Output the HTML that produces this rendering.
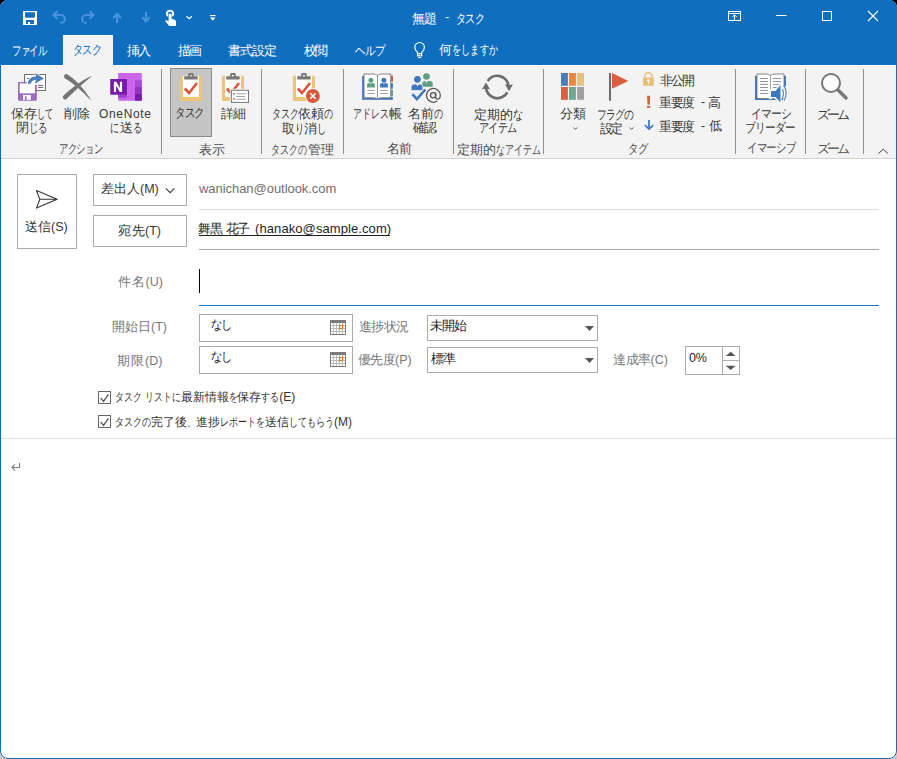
<!DOCTYPE html>
<html><head><meta charset="utf-8">
<style>
*{box-sizing:border-box;margin:0;padding:0}
html,body{width:897px;height:759px;overflow:hidden}
body{font-family:"Liberation Sans",sans-serif;position:relative;background:linear-gradient(#000 0 50%,#c8c8c8 50% 100%)}
#win{position:absolute;left:0;top:0;width:897px;height:759px;background:#fff;border-radius:8px;overflow:hidden}
#frame{position:absolute;left:0;top:0;width:897px;height:759px;border-radius:8px;border:1px solid #106ebe;pointer-events:none}
.p{position:absolute}
#title{left:0;top:0;width:897px;height:65px;background:#106ebe}
#ribbon{left:0;top:65px;width:897px;height:93px;background:#f3f3f3;border-bottom:1px solid #d2d2d2}
.t{position:absolute;white-space:nowrap;line-height:14px}
.tab{top:43px;font-size:12.5px;color:#fff}
.rl{font-size:12px;color:#262626}
.gl{top:142px;font-size:12px;color:#444}
.sep{position:absolute;top:69px;width:1px;height:84px;background:#c6c6c6}
.lbl{font-size:12.5px;color:#707070}
.box{position:absolute;border:1px solid #ababab;background:#fff}
svg{position:absolute;overflow:visible}
</style></head><body>
<div id="win">
<svg width="897" height="759" viewBox="0 0 897 759" style="left:0;top:0;position:absolute">
<!-- backgrounds -->
<rect x="0" y="0" width="897" height="65" fill="#106ebe"/>
<rect x="0" y="65" width="897" height="93" fill="#f3f3f3"/>
<rect x="0" y="65" width="897" height="1" fill="#fbfbfb"/>
<rect x="0" y="158" width="897" height="1" fill="#d2d2d2"/>
<rect x="63" y="35" width="50" height="31" fill="#f3f3f3"/><rect x="63" y="35" width="50" height="1" fill="#fafafa"/><rect x="63" y="35" width="1" height="30" fill="#fafafa"/>

<!-- QAT -->
<rect x="23" y="11" width="14" height="14" fill="#fff"/>
<path d="M25 12.3h10v4.4l-1 1H26l-1-1z" fill="#106ebe"/>
<rect x="26" y="20" width="8" height="4" fill="#106ebe"/>
<rect x="28" y="22" width="2" height="2" fill="#fff"/>
<g fill="none" stroke="#4593da" stroke-width="2.1">
<path d="M53 15H61A3.9 3.9 0 0 1 61 22.8H60.2M57.4 11.2L53.5 15 57.4 18.8"/>
<path d="M94 15H86A3.9 3.9 0 0 0 86 22.8H86.8M89.6 11.2L93.5 15 89.6 18.8"/>
<path d="M117.1 23V13.8M113.3 17.9L117.1 13.8 120.9 17.9" stroke-width="2.2"/>
<path d="M146 12V21.4M142.2 17.3L146 21.4 149.8 17.3" stroke-width="2.2"/>
</g>
<path d="M167.82 16.03A3.15 3.15 0 1 1 172.28 16.03" fill="none" stroke="#f4f4f4" stroke-width="2"/>
<path d="M168.6 14.5q0-1.1 1.5-1.1t1.5 1.1V18.8l3.2 1q1.2.4 1.2 1.7V26h-6.7l-4.3-5.2q.8-1 2-.3l1.6 1.1z" fill="#fff"/>
<path d="M186.5 16.3l2.7 2.4 2.7-2.4" fill="none" stroke="#fff" stroke-width="1.2"/>
<rect x="210" y="15" width="5.5" height="1.1" fill="#fff"/>
<path d="M210 17.4h5.5l-2.75 3.3z" fill="#fff"/>

<!-- window controls -->
<g fill="none" stroke="#fff" stroke-width="1">
<rect x="728.5" y="11.5" width="12" height="9"/>
<path d="M728.5 13.5h12M734.5 20.5V15M732.3 17l2.2-2.2 2.2 2.2"/>
<path d="M776 15.5h10.5"/>
<rect x="822.5" y="11.5" width="9" height="9"/>
<path d="M868 11l10 10M878 11l-10 10" stroke-width="1.1"/>
<path d="M417.7 53.5L417.2 52Q414.8 50 414.8 47.3A4.8 4.8 0 0 1 424.4 47.3Q424.4 50 422 52L421.5 53.5" stroke-width="1.2"/>
<rect x="417.6" y="53.6" width="4" height="2.2" stroke-width="1.2"/>
</g>
<rect x="418" y="57" width="3.2" height="1.1" fill="#fff"/>

<!-- ribbon separators -->
<g fill="#8f8f8f"><rect x="161" y="69" width="1" height="85"/><rect x="261" y="69" width="1" height="85"/><rect x="343" y="69" width="1" height="85"/><rect x="453" y="69" width="1" height="85"/><rect x="543" y="69" width="1" height="85"/><rect x="735" y="69" width="1" height="85"/><rect x="805" y="69" width="1" height="85"/><rect x="863" y="69" width="1" height="85"/></g>
<path d="M878.5 153.5l4.7-4.3 4.7 4.3" fill="none" stroke="#444" stroke-width="1"/>

<!-- selected button -->
<rect x="170.5" y="68.5" width="41" height="68" fill="#c5c5c5" stroke="#8a8a8a"/>

<!-- Save & close icon -->
<g transform="translate(14,68)">
<rect x="10.5" y="6.5" width="21" height="16" fill="#fff" stroke="#6d6d6d"/>
<path d="M13 10.5h2M24 17.5h5M24 19.5h5" stroke="#6d6d6d"/>
<path d="M4 15q0-1 1-1h7.8v1.6H5.8v9.6H21V16.8h1.8v14.9q0 1-1 1H5q-1 0-1-1z" fill="#9b6bbe"/>
<rect x="5.8" y="15.6" width="15.2" height="9.6" fill="#fff"/>
<rect x="9" y="27" width="7.8" height="4.9" fill="#fff"/>
<rect x="10.9" y="28.3" width="1.7" height="3.6" fill="#9b6bbe"/>
<path d="M13.8 15.7C14.5 11 17.5 8.5 22 8.5L21.2 5 30 10.4 20.8 15.7 22 11.8C19.5 11.8 17.5 13 16.8 15.7Z" fill="#4a7fbf" stroke="#fff" stroke-width="1.6" paint-order="stroke"/>
</g>
<!-- Delete -->
<g transform="translate(58,68)" fill="#747474">
<path d="M7.18 10.51Q17.02 15.96 32.33 31.82L32.87 31.38Q19.98 12.44 9.42 6.49A2.30 2.30 0 0 0 7.18 10.51Z"/>
<path d="M8.71 30.85Q21.08 18.42 33.39 8.60L33.01 8.00Q18.52 15.18 5.49 27.55A2.30 2.30 0 0 0 8.71 30.85Z"/>
</g>
<!-- OneNote -->
<g transform="translate(106,68)">
<rect x="12.1" y="5" width="23.7" height="27.7" rx=".6" fill="#ca64ea"/>
<rect x="29" y="12.1" width="6.8" height="6.9" fill="#ae4bd5"/>
<rect x="29" y="19" width="6.8" height="6.9" fill="#9332bf"/>
<rect x="29" y="25.9" width="6.8" height="6.8" fill="#7719aa"/>
<rect x="12.1" y="26.8" width="8.6" height="3" fill="#9e40c8"/>
<rect x="4.2" y="11.1" width="16.7" height="15.7" rx=".7" fill="#7719aa"/>
<path d="M7.9 24V13.8h2.4l3.6 6.3v-6.3h2.2V24h-2.3l-3.7-6.4V24z" fill="#fff"/>
</g>
<!-- Task (clipboard) -->
<g id="clip1" transform="translate(174,68)">
<rect x="5.9" y="7.8" width="22.1" height="25.2" rx="1" fill="#ebc57a"/>
<rect x="9" y="7.8" width="15.9" height="21.1" fill="#fff"/>
<rect x="10.2" y="8.3" width="13.5" height="3.3" rx=".5" fill="#777"/>
<rect x="14.2" y="5" width="5.5" height="4" rx="1" fill="#777"/>
<rect x="16.1" y="6.9" width="1.7" height="1.6" fill="#ddd"/>
<path d="M10.8 20.5l4.2 4.5 8-10" fill="none" stroke="#d9583b" stroke-width="2.6"/>
</g>
<!-- Details -->
<g transform="translate(216,68)">
<rect x="5.9" y="7.8" width="22.1" height="25.2" rx="1" fill="#ebc57a"/>
<rect x="9" y="7.8" width="15.9" height="21.1" fill="#fff"/>
<rect x="10.2" y="8.3" width="13.5" height="3.3" rx=".5" fill="#777"/>
<rect x="14.2" y="5" width="5.5" height="4" rx="1" fill="#777"/>
<rect x="16.1" y="6.9" width="1.7" height="1.6" fill="#fff"/>
<path d="M10.8 20.5l4.2 4.5 8-10" fill="none" stroke="#d9583b" stroke-width="2.6"/>
<rect x="13.9" y="20.8" width="20.1" height="15.1" fill="#f3f3f3"/>
<rect x="15.4" y="22.3" width="17.1" height="12.1" fill="#fff" stroke="#777"/>
<rect x="17.1" y="25" width="1.7" height="1.7" fill="#888"/>
<rect x="17.1" y="30" width="1.7" height="1.7" fill="#888"/>
<path d="M20.2 25.8h9.8M20.2 28.5h8.8M20.2 31.2h9.8" stroke="#999" stroke-width=".9"/>
</g>
<!-- Cancel assignment -->
<g transform="translate(287,68)">
<rect x="5.9" y="7.8" width="22.1" height="25.2" rx="1" fill="#ebc57a"/>
<rect x="9" y="7.8" width="15.9" height="21.1" fill="#fff"/>
<rect x="10.2" y="8.3" width="13.5" height="3.3" rx=".5" fill="#777"/>
<rect x="14.2" y="5" width="5.5" height="4" rx="1" fill="#777"/>
<rect x="16.1" y="6.9" width="1.7" height="1.6" fill="#fff"/>
<path d="M10.8 20.5l4.2 4.5 8-10" fill="none" stroke="#d9583b" stroke-width="2.6"/>
<circle cx="25.9" cy="28" r="8" fill="#f3f3f3"/>
<circle cx="25.9" cy="28" r="6.9" fill="#d9583b"/>
<path d="M23.2 25.3l5.4 5.4M28.6 25.3l-5.4 5.4" stroke="#fff" stroke-width="1.6"/>
</g>
<!-- Address book -->
<g transform="translate(359,68)">
<rect x="3.1" y="7.8" width="30.8" height="24" fill="#3f78c0"/>
<rect x="32" y="7.8" width="1.9" height="6" fill="#d9583b"/>
<rect x="32" y="22" width="1.9" height="5.8" fill="#5e9e83"/>
<rect x="31.8" y="13.8" width="2.2" height="1.2" fill="#f3f3f3"/>
<rect x="31.8" y="20.8" width="2.2" height="1.2" fill="#f3f3f3"/>
<rect x="31.8" y="27.8" width="2.2" height="1.2" fill="#f3f3f3"/>
<path d="M5 6H14Q17 6 18.5 7.5Q20 6 23 6H31.8V29.8H23Q20 29.8 18.5 31Q17 29.8 14 29.8H5Z" fill="#fff" stroke="#777" stroke-width=".9"/>
<path d="M18.5 7.5V31" stroke="#888" stroke-width=".9"/>
<circle cx="11.9" cy="12.2" r="2.5" fill="#5e9e83"/>
<path d="M8 19.6V16.6Q8 15 10 15H13.8Q15.9 15 15.9 16.6V19.6Z" fill="#5e9e83"/>
<path d="M11.1 15l.8 1.2.8-1.2z" fill="#fff"/>
<circle cx="24.9" cy="12.2" r="2.5" fill="#3f78c0"/>
<path d="M21 19.6V16.6Q21 15 23 15H26.8Q28.9 15 28.9 16.6V19.6Z" fill="#3f78c0"/>
<path d="M24.1 15l.8 1.2.8-1.2z" fill="#fff"/>
<path d="M8.3 22.4h7.6M8.3 25.5h7.6M21.1 22.4h7.7M21.1 25.5h7.7" stroke="#999" stroke-width=".9"/>
</g>
<!-- Check names -->
<g transform="translate(408,68)">
<circle cx="18.5" cy="8.5" r="3.3" fill="#5e9e83"/>
<path d="M14.2 18.8V16Q14.2 13 17 13H22Q24.7 13 24.7 16V18.8Z" fill="#5e9e83"/>
<path d="M17.3 13l1.2 2.2 1.2-2.2z" fill="#f3f3f3"/>
<circle cx="9.4" cy="11.3" r="3.4" fill="#3f78c0"/>
<path d="M3.1 22.6V19.1Q3.1 16.1 6.1 16.1H11.9Q14.9 16.1 14.9 19.1V22.6Z" fill="#3f78c0" stroke="#f3f3f3" stroke-width=".8"/>
<path d="M8.2 16.1l1.3 2.4 1.3-2.4z" fill="#f3f3f3"/>
<path d="M4.3 26.2l4.6 4.8 8.4-9.5" fill="none" stroke="#f3f3f3" stroke-width="4.4"/>
<path d="M4.3 26.2l4.6 4.8 8.4-9.5" fill="none" stroke="#3f78c0" stroke-width="2.6"/>
<circle cx="25.1" cy="27.3" r="2.6" fill="none" stroke="#555" stroke-width="1.25"/><path d="M27.7 24.4V29.4Q27.7 31.1 29.5 31.1Q32.3 31.1 32.3 27.3A6.9 6.9 0 1 0 29.2 33.1" fill="none" stroke="#555" stroke-width="1.25"/>
</g>
<!-- Recurrence -->
<g transform="translate(479,68)" fill="#6d6d6d">
<path d="M8.72 13.01A11.3 11.3 0 0 1 29.5 18" fill="none" stroke="#6d6d6d" stroke-width="2.7"/>
<path d="M25.9 16.2L29.95 17.3 34.1 16.2 30 23.2Z"/>
<path d="M28.3 24.3A11.3 11.3 0 0 1 7.04 18.5" fill="none" stroke="#6d6d6d" stroke-width="2.7"/>
<path d="M2.9 21.5L7 20.4 11.1 21.5 7 14.6Z"/>
</g>
<!-- Categorize -->
<g transform="translate(556,68)">
<rect x="5" y="5" width="6.9" height="12.8" fill="#4a7ebb"/>
<rect x="13" y="5" width="6.9" height="12.8" fill="#e8883f"/>
<rect x="21.1" y="5" width="6.9" height="12.8" fill="#e8c17e"/>
<rect x="5" y="19" width="6.9" height="12.8" fill="#d9603f"/>
<rect x="13" y="19" width="6.9" height="12.8" fill="#6fa690"/>
<rect x="21.1" y="19" width="6.9" height="12.8" fill="#a0a0a0"/>
</g>
<!-- Flag -->
<g transform="translate(600,68)">
<rect x="9" y="5" width="2" height="27.8" fill="#6d6d6d"/>
<path d="M12 5L28.4 12.9 12 20.8Z" fill="#d9603f"/>
</g>
<!-- lock / ! / down -->
<rect x="643.1" y="77.4" width="10.7" height="8.3" rx="1" fill="#e9bd75"/>
<path d="M644.8 77.6V76.4A3.65 3.65 0 0 1 652.1 76.4V77.6" fill="none" stroke="#e9bd75" stroke-width="1.4"/>
<circle cx="648.5" cy="80.4" r="1.2" fill="#fff"/>
<rect x="648" y="80.6" width="1" height="3.2" fill="#fff"/>
<path d="M647 95.8H650.2L649.7 104.8H647.5Z" fill="#d9603f"/>
<rect x="647" y="106" width="3.2" height="1.9" fill="#d9603f"/>
<rect x="648.1" y="120" width="1.8" height="7" fill="#3f78c0"/>
<path d="M644.8 124.2L649 127.6 653.3 124.2V126.2L649 130.3 644.8 126.2Z" fill="#3f78c0"/>
<!-- Immersive reader -->
<g transform="translate(752,68)">
<rect x="3" y="7.8" width="31" height="24.2" fill="#3f78c0"/>
<path d="M5 6H14Q17 6 18.5 7.5Q20 6 23 6H32V30.5H23Q20 30.5 18.5 31.7Q17 30.5 14 30.5H5Z" fill="#fff" stroke="#777" stroke-width=".9"/>
<path d="M18.5 7.5V21.5" stroke="#999" stroke-width=".9"/>
<path d="M8 10.5h8M8 13.5h8M8 16.4h8M8 19.5h8M8 22.4h8M8 25.5h8M21 10.5h8M21 13.5h8M21 16.4h8M21 19.5h8" stroke="#888" stroke-width=".9"/>
<path d="M18 22H22.2L28.2 15.8H29.6V35.8H28.2L22.2 30H18Z" fill="#fff"/>
<path d="M19 23H23.5L28.5 17V34.5L23.5 29H19Z" fill="#3f78c0"/>
<path d="M30.4 21.3Q32.4 25.5 30.4 29.7M32.3 18.6Q36 25.5 32.3 32.4" fill="none" stroke="#fff" stroke-width="2.8"/><path d="M30.4 21.3Q32.4 25.5 30.4 29.7M32.3 18.6Q36 25.5 32.3 32.4" fill="none" stroke="#3f78c0" stroke-width="1.1"/>
</g>
<!-- Zoom -->
<g transform="translate(816,68)">
<path d="M21.5 21.5L30 30" stroke="#777" stroke-width="3.4" stroke-linecap="round"/>
<circle cx="15" cy="15" r="9" fill="#fff" stroke="#777" stroke-width="2"/>
</g>

<!-- chevrons under 分類 / 設定 -->
<path d="M573.3 127.5l2 1.8 2-1.8M629.5 127.5l2 1.8 2-1.8" fill="none" stroke="#555" stroke-width="1"/>

<!-- form -->
<rect x="17.5" y="174.5" width="59" height="74" fill="#fff" stroke="#ababab"/>
<path d="M36.5 190.6L57.2 199.3 36.5 208.1 39.8 199.3ZM39.8 199.3H57.2" fill="none" stroke="#333" stroke-width="1.1" stroke-linejoin="round"/>
<rect x="93.5" y="174.5" width="93" height="31" fill="#fff" stroke="#ababab"/>
<path d="M165.8 188.3l4.3 4.3 4.3-4.3" fill="none" stroke="#444" stroke-width="1.2"/>
<rect x="93.5" y="215.5" width="93" height="31" fill="#fff" stroke="#ababab"/>
<rect x="199" y="209" width="680" height="1" fill="#dcdcdc"/>
<rect x="199" y="249" width="680" height="1" fill="#a8a8a8"/>
<rect x="199" y="235" width="191" height="1" fill="#1e1e1e"/>
<rect x="199" y="269" width="1" height="24" fill="#000"/>
<rect x="199" y="305" width="680" height="1" fill="#1a73cf"/>

<rect x="199.5" y="314.5" width="153" height="27" fill="#fff" stroke="#ababab"/>
<rect x="199.5" y="346.5" width="153" height="27" fill="#fff" stroke="#ababab"/>
<g><rect x="330" y="320" width="16" height="15" fill="#7c7c7c"/><rect x="331" y="323" width="14" height="11" fill="#bdbdbd"/><rect x="331" y="323" width="2" height="2" fill="#fff"/><rect x="331" y="326" width="2" height="2" fill="#fff"/><rect x="331" y="329" width="2" height="2" fill="#fff"/><rect x="331" y="332" width="2" height="2" fill="#fff"/><rect x="334" y="323" width="2" height="2" fill="#fff"/><rect x="334" y="326" width="2" height="2" fill="#fff"/><rect x="334" y="329" width="2" height="2" fill="#fff"/><rect x="334" y="332" width="2" height="2" fill="#fff"/><rect x="337" y="323" width="2" height="2" fill="#fff"/><rect x="337" y="326" width="2" height="2" fill="#fff"/><rect x="337" y="329" width="2" height="2" fill="#fff"/><rect x="337" y="332" width="2" height="2" fill="#fff"/><rect x="340" y="323" width="2" height="2" fill="#fff"/><rect x="340" y="326" width="2" height="2" fill="#fff"/><rect x="340" y="329" width="2" height="2" fill="#fff"/><rect x="340" y="332" width="2" height="2" fill="#fff"/><rect x="343" y="323" width="2" height="2" fill="#fff"/><rect x="343" y="326" width="2" height="2" fill="#fff"/><rect x="343" y="329" width="2" height="2" fill="#fff"/><rect x="343" y="332" width="2" height="2" fill="#fff"/><rect x="339.5" y="325.5" width="3" height="3" fill="#fff" stroke="#e8740f" stroke-width="1"/></g>
<g><rect x="330" y="352" width="16" height="15" fill="#7c7c7c"/><rect x="331" y="355" width="14" height="11" fill="#bdbdbd"/><rect x="331" y="355" width="2" height="2" fill="#fff"/><rect x="331" y="358" width="2" height="2" fill="#fff"/><rect x="331" y="361" width="2" height="2" fill="#fff"/><rect x="331" y="364" width="2" height="2" fill="#fff"/><rect x="334" y="355" width="2" height="2" fill="#fff"/><rect x="334" y="358" width="2" height="2" fill="#fff"/><rect x="334" y="361" width="2" height="2" fill="#fff"/><rect x="334" y="364" width="2" height="2" fill="#fff"/><rect x="337" y="355" width="2" height="2" fill="#fff"/><rect x="337" y="358" width="2" height="2" fill="#fff"/><rect x="337" y="361" width="2" height="2" fill="#fff"/><rect x="337" y="364" width="2" height="2" fill="#fff"/><rect x="340" y="355" width="2" height="2" fill="#fff"/><rect x="340" y="358" width="2" height="2" fill="#fff"/><rect x="340" y="361" width="2" height="2" fill="#fff"/><rect x="340" y="364" width="2" height="2" fill="#fff"/><rect x="343" y="355" width="2" height="2" fill="#fff"/><rect x="343" y="358" width="2" height="2" fill="#fff"/><rect x="343" y="361" width="2" height="2" fill="#fff"/><rect x="343" y="364" width="2" height="2" fill="#fff"/><rect x="339.5" y="357.5" width="3" height="3" fill="#fff" stroke="#e8740f" stroke-width="1"/></g>

<rect x="427.5" y="315.5" width="170" height="25" fill="#fff" stroke="#ababab"/>
<rect x="427.5" y="347.5" width="170" height="25" fill="#fff" stroke="#ababab"/>
<path d="M585 326h9l-4.5 5zM585 358h9l-4.5 5z" fill="#555"/>

<rect x="685.5" y="346.5" width="54" height="28" fill="#fff" stroke="#ababab"/>
<rect x="722" y="347" width="1" height="27" fill="#ababab"/>
<rect x="722" y="360" width="17" height="1" fill="#ababab"/>
<path d="M725.8 356h9.8l-4.9-4.2zM725.8 365.7h9.8l-4.9 4.2z" fill="#555"/>

<g fill="#fff" stroke="#666" stroke-width="1">
<rect x="98.5" y="391.5" width="12" height="12"/>
<rect x="98.5" y="415.5" width="12" height="12"/>
</g>
<path d="M100.8 398.1l2.8 3.3 4.8-7M100.8 422.1l2.8 3.3 4.8-7" fill="none" stroke="#555" stroke-width="1.3"/>

<rect x="1" y="438" width="895" height="1" fill="#e1dfdd"/>
<path d="M19.5 463V467.5H11.8M15 464.3L11.8 467.5 15 470.7" fill="none" stroke="#808080" stroke-width="1.1"/>
</svg>
<div class="t" id="tb1" style="left:412px;top:12px;font-size:12.5px;color:#fff;letter-spacing:-0.600px;">無題</div>
<div class="t" id="tb2" style="left:445px;top:10px;font-size:12.5px;color:#fff;letter-spacing:0.000px;">-</div>
<div class="t" id="tb3" style="left:456px;top:12px;font-size:12.5px;color:#fff;letter-spacing:-1.000px;transform:scaleX(0.7812);transform-origin:0 0;">タスク</div>
<div class="t" id="tab1" style="left:12px;top:44px;font-size:12.5px;color:#fff;letter-spacing:-1.000px;transform:scaleX(0.7244);transform-origin:0 0;">ファイル</div>
<div class="t" id="tab2" style="left:73px;top:43px;font-size:12.5px;color:#106ebe;letter-spacing:-1.000px;transform:scaleX(0.7812);transform-origin:0 0;">タスク</div>
<div class="t" id="tab3" style="left:127px;top:44px;font-size:12.5px;color:#fff;letter-spacing:-1.800px;">挿入</div>
<div class="t" id="tab4" style="left:178px;top:44px;font-size:12.5px;color:#fff;letter-spacing:-1.800px;">描画</div>
<div class="t" id="tab5" style="left:228px;top:44px;font-size:12.5px;color:#fff;letter-spacing:-1.000px;">書式設定</div>
<div class="t" id="tab6" style="left:304px;top:44px;font-size:12.5px;color:#fff;letter-spacing:-1.800px;">校閲</div>
<div class="t" id="tab7" style="left:355px;top:44px;font-size:12.5px;color:#fff;letter-spacing:-1.000px;transform:scaleX(0.8156);transform-origin:0 0;">ヘルプ</div>
<div class="t" id="tab8" style="left:439px;top:43px;font-size:12.5px;color:#fff;letter-spacing:0.000px;">何<span class="k" style="display:inline-block;transform:scaleX(0.7077);transform-origin:0 0;margin-right:-19.000px">をしますか</span></div>
<div class="t" id="r1" style="left:11px;top:107px;font-size:12.5px;color:#383838;letter-spacing:0.000px;">保存<span class="k" style="display:inline-block;transform:scaleX(0.6269);transform-origin:0 0;margin-right:-8.800px">して</span></div>
<div class="t" id="r2" style="left:16px;top:121px;font-size:12.5px;color:#383838;letter-spacing:0.000px;">閉<span class="k" style="display:inline-block;transform:scaleX(0.7231);transform-origin:0 0;margin-right:-7.200px">じる</span></div>
<div class="t" id="r3" style="left:64px;top:107px;font-size:12.5px;color:#383838;letter-spacing:-0.400px;">削除</div>
<div class="t" id="r4" style="left:99px;top:107px;font-size:12px;color:#383838;letter-spacing:0.667px;">OneNote</div>
<div class="t" id="r5" style="left:110px;top:121px;font-size:12.5px;color:#383838;letter-spacing:0.000px;"><span class="k" style="display:inline-block;transform:scaleX(0.7071);transform-origin:0 0;margin-right:-3.458px">に</span>送<span class="k" style="display:inline-block;transform:scaleX(0.7071);transform-origin:0 0;margin-right:-3.458px">る</span></div>
<div class="t" id="g1" style="left:59px;top:142px;font-size:12.5px;color:#4e4e4e;letter-spacing:-1.000px;transform:scaleX(0.7232);transform-origin:0 0;">アクション</div>
<div class="t" id="r6" style="left:175px;top:106px;font-size:12.5px;color:#383838;letter-spacing:-1.000px;transform:scaleX(0.8118);transform-origin:0 0;">タスク</div>
<div class="t" id="r7" style="left:221px;top:107px;font-size:12.5px;color:#383838;letter-spacing:-1.400px;">詳細</div>
<div class="t" id="g2" style="left:199px;top:143px;font-size:12.5px;color:#4e4e4e;letter-spacing:0.100px;">表示</div>
<div class="t" id="r8" style="left:272px;top:107px;font-size:12.5px;color:#383838;letter-spacing:0.000px;"><span class="k" style="display:inline-block;transform:scaleX(0.6910);transform-origin:0 0;margin-right:-12.725px">タスク</span>依頼<span class="k" style="display:inline-block;transform:scaleX(0.6910);transform-origin:0 0;margin-right:-4.242px">の</span></div>
<div class="t" id="r9" style="left:282px;top:122px;font-size:12.5px;color:#383838;letter-spacing:0.000px;">取<span class="k" style="display:inline-block;transform:scaleX(0.7071);transform-origin:0 0;margin-right:-3.558px">り</span>消<span class="k" style="display:inline-block;transform:scaleX(0.7071);transform-origin:0 0;margin-right:-3.558px">し</span></div>
<div class="t" id="g3" style="left:271px;top:143px;font-size:12.5px;color:#4e4e4e;letter-spacing:0.000px;"><span class="k" style="display:inline-block;transform:scaleX(0.6926);transform-origin:0 0;margin-right:-15.283px">タスクの</span>管理</div>
<div class="t" id="r10" style="left:353px;top:107px;font-size:12.5px;color:#383838;letter-spacing:0.000px;"><span class="k" style="display:inline-block;transform:scaleX(0.6830);transform-origin:0 0;margin-right:-16.483px">アドレス</span>帳</div>
<div class="t" id="r11" style="left:408px;top:107px;font-size:12.5px;color:#383838;letter-spacing:0.000px;">名前<span class="k" style="display:inline-block;transform:scaleX(0.6910);transform-origin:0 0;margin-right:-4.117px">の</span></div>
<div class="t" id="r12" style="left:413px;top:121px;font-size:12.5px;color:#383838;letter-spacing:-2.100px;">確認</div>
<div class="t" id="g4" style="left:387px;top:142px;font-size:12.5px;color:#4e4e4e;letter-spacing:-0.800px;">名前</div>
<div class="t" id="r13" style="left:474px;top:108px;font-size:12.5px;color:#383838;letter-spacing:0.000px;">定期的<span class="k" style="display:inline-block;transform:scaleX(0.7808);transform-origin:0 0;margin-right:-2.750px">な</span></div>
<div class="t" id="r14" style="left:479px;top:121px;font-size:12.5px;color:#383838;letter-spacing:-1.000px;transform:scaleX(0.7813);transform-origin:0 0;">アイテム</div>
<div class="t" id="g5" style="left:457px;top:143px;font-size:12.5px;color:#4e4e4e;letter-spacing:0.000px;">定期的<span class="k" style="display:inline-block;transform:scaleX(0.6910);transform-origin:0 0;margin-right:-20.683px">なアイテム</span></div>
<div class="t" id="r15" style="left:560px;top:107px;font-size:12.5px;color:#383838;letter-spacing:-0.400px;">分類</div>
<div class="t" id="r16" style="left:597px;top:108px;font-size:12.5px;color:#383838;letter-spacing:-1.000px;transform:scaleX(0.7582);transform-origin:0 0;">フラグの</div>
<div class="t" id="r17" style="left:600px;top:122px;font-size:12.5px;color:#383838;letter-spacing:-2.700px;">設定</div>
<div class="t" id="r18" style="left:660px;top:74px;font-size:12.5px;color:#383838;letter-spacing:-1.800px;">非公開</div>
<div class="t" id="r19" style="left:659px;top:96px;font-size:12.5px;color:#383838;letter-spacing:-1.300px;">重要度</div>
<div class="t" id="r19b" style="left:701px;top:95px;font-size:12px;color:#383838;letter-spacing:0.000px;">-</div>
<div class="t" id="r19c" style="left:708px;top:96px;font-size:12.5px;color:#383838;letter-spacing:0.000px;">高</div>
<div class="t" id="r20" style="left:659px;top:120px;font-size:12.5px;color:#383838;letter-spacing:-1.300px;">重要度</div>
<div class="t" id="r20b" style="left:701px;top:119px;font-size:12px;color:#383838;letter-spacing:0.000px;">-</div>
<div class="t" id="r20c" style="left:709px;top:119px;font-size:12.5px;color:#383838;letter-spacing:0.000px;">低</div>
<div class="t" id="g6" style="left:628px;top:142px;font-size:12.5px;color:#4e4e4e;letter-spacing:-1.000px;transform:scaleX(0.8075);transform-origin:0 0;">タグ</div>
<div class="t" id="r21" style="left:751px;top:107px;font-size:12.5px;color:#383838;letter-spacing:-1.000px;transform:scaleX(0.8271);transform-origin:0 0;">イマーシ</div>
<div class="t" id="r22" style="left:745px;top:121px;font-size:12.5px;color:#383838;letter-spacing:-1.000px;transform:scaleX(0.8266);transform-origin:0 0;">ブリーダー</div>
<div class="t" id="g7" style="left:747px;top:141px;font-size:12.5px;color:#4e4e4e;letter-spacing:-1.000px;transform:scaleX(0.8042);transform-origin:0 0;">イマーシブ</div>
<div class="t" id="r23" style="left:817px;top:108px;font-size:12.5px;color:#383838;letter-spacing:-3.100px;">ズーム</div>
<div class="t" id="g8" style="left:817px;top:142px;font-size:12.5px;color:#4e4e4e;letter-spacing:-3.100px;">ズーム</div>
<div class="t" id="f1" style="left:25px;top:220px;font-size:12.5px;color:#333;letter-spacing:0.000px;">送信<span style="letter-spacing:0">(S)</span></div>
<div class="t" id="f2" style="left:101px;top:182px;font-size:12.5px;color:#333;letter-spacing:0.000px;">差出人<span style="letter-spacing:0">(M)</span></div>
<div class="t" id="f3" style="left:118px;top:224px;font-size:12.5px;color:#333;letter-spacing:0.500px;">宛先<span style="letter-spacing:0">(T)</span></div>
<div class="t" id="f4" style="left:199px;top:182px;font-size:13px;color:#6f6f6f;letter-spacing:-0.047px;">wanichan@outlook.com</div>
<div class="t" id="f5a" style="left:198px;top:222px;font-size:13px;color:#1e1e1e;letter-spacing:-1.400px;">舞黒</div>
<div class="t" id="f5b" style="left:226px;top:222px;font-size:13px;color:#1e1e1e;letter-spacing:-1.600px;">花子</div>
<div class="t" id="f5c" style="left:255px;top:222px;font-size:13px;color:#1e1e1e;letter-spacing:0.089px;">(hanako@sample.com)</div>
<div class="t" id="f6" style="left:118px;top:275px;font-size:12.5px;color:#767676;letter-spacing:0.750px;">件名<span style="letter-spacing:0">(U)</span></div>
<div class="t" id="f7" style="left:112px;top:320px;font-size:12.5px;color:#767676;letter-spacing:-0.000px;">開始日<span style="letter-spacing:0">(T)</span></div>
<div class="t" id="f8" style="left:117px;top:354px;font-size:12.5px;color:#767676;letter-spacing:1.000px;">期限<span style="letter-spacing:0">(D)</span></div>
<div class="t" id="f9" style="left:359px;top:320px;font-size:12.5px;color:#767676;letter-spacing:-0.600px;">進捗状況</div>
<div class="t" id="f10" style="left:358px;top:353px;font-size:12.5px;color:#767676;letter-spacing:-0.667px;">優先度<span style="letter-spacing:0">(P)</span></div>
<div class="t" id="f11" style="left:430px;top:319px;font-size:12.5px;color:#1e1e1e;letter-spacing:-0.900px;">未開始</div>
<div class="t" id="f12" style="left:431px;top:352px;font-size:12.5px;color:#1e1e1e;letter-spacing:-1.500px;">標準</div>
<div class="t" id="f13" style="left:613px;top:353px;font-size:12.5px;color:#767676;letter-spacing:-0.500px;">達成率<span style="letter-spacing:0">(C)</span></div>
<div class="t" id="f14" style="left:689px;top:351px;font-size:12.5px;color:#1e1e1e;letter-spacing:-0.200px;">0%</div>
<div class="t" id="f15" style="left:211px;top:318px;font-size:12.5px;color:#1e1e1e;letter-spacing:-1.000px;transform:scaleX(0.8657);transform-origin:0 0;">なし</div>
<div class="t" id="f16" style="left:211px;top:350px;font-size:12.5px;color:#1e1e1e;letter-spacing:-1.000px;transform:scaleX(0.8657);transform-origin:0 0;">なし</div>
<div class="t" id="f17" style="left:115px;top:390px;font-size:12px;color:#333;letter-spacing:0.000px;"><span class="k" style="display:inline-block;transform:scaleX(0.7375);transform-origin:0 0;margin-right:-9.360px">タスク</span> <span class="k" style="display:inline-block;transform:scaleX(0.7375);transform-origin:0 0;margin-right:-12.480px">リストに</span>最新情報<span class="k" style="display:inline-block;transform:scaleX(0.7375);transform-origin:0 0;margin-right:-3.120px">を</span>保存<span class="k" style="display:inline-block;transform:scaleX(0.7375);transform-origin:0 0;margin-right:-6.240px">する</span><span style="letter-spacing:0">(E)</span></div>
<div class="t" id="f18" style="left:115px;top:415px;font-size:12px;color:#333;letter-spacing:0.000px;"><span class="k" style="display:inline-block;transform:scaleX(0.7500);transform-origin:0 0;margin-right:-12.000px">タスクの</span>完了後<span class="k" style="display:inline-block;transform:scaleX(0.7500);transform-origin:0 0;margin-right:-3.000px">、</span>進捗<span class="k" style="display:inline-block;transform:scaleX(0.7500);transform-origin:0 0;margin-right:-15.000px">レポートを</span>送信<span class="k" style="display:inline-block;transform:scaleX(0.7500);transform-origin:0 0;margin-right:-15.000px">してもらう</span><span style="letter-spacing:0">(M)</span></div>
</div>
<div id="frame"></div>
</body></html>
